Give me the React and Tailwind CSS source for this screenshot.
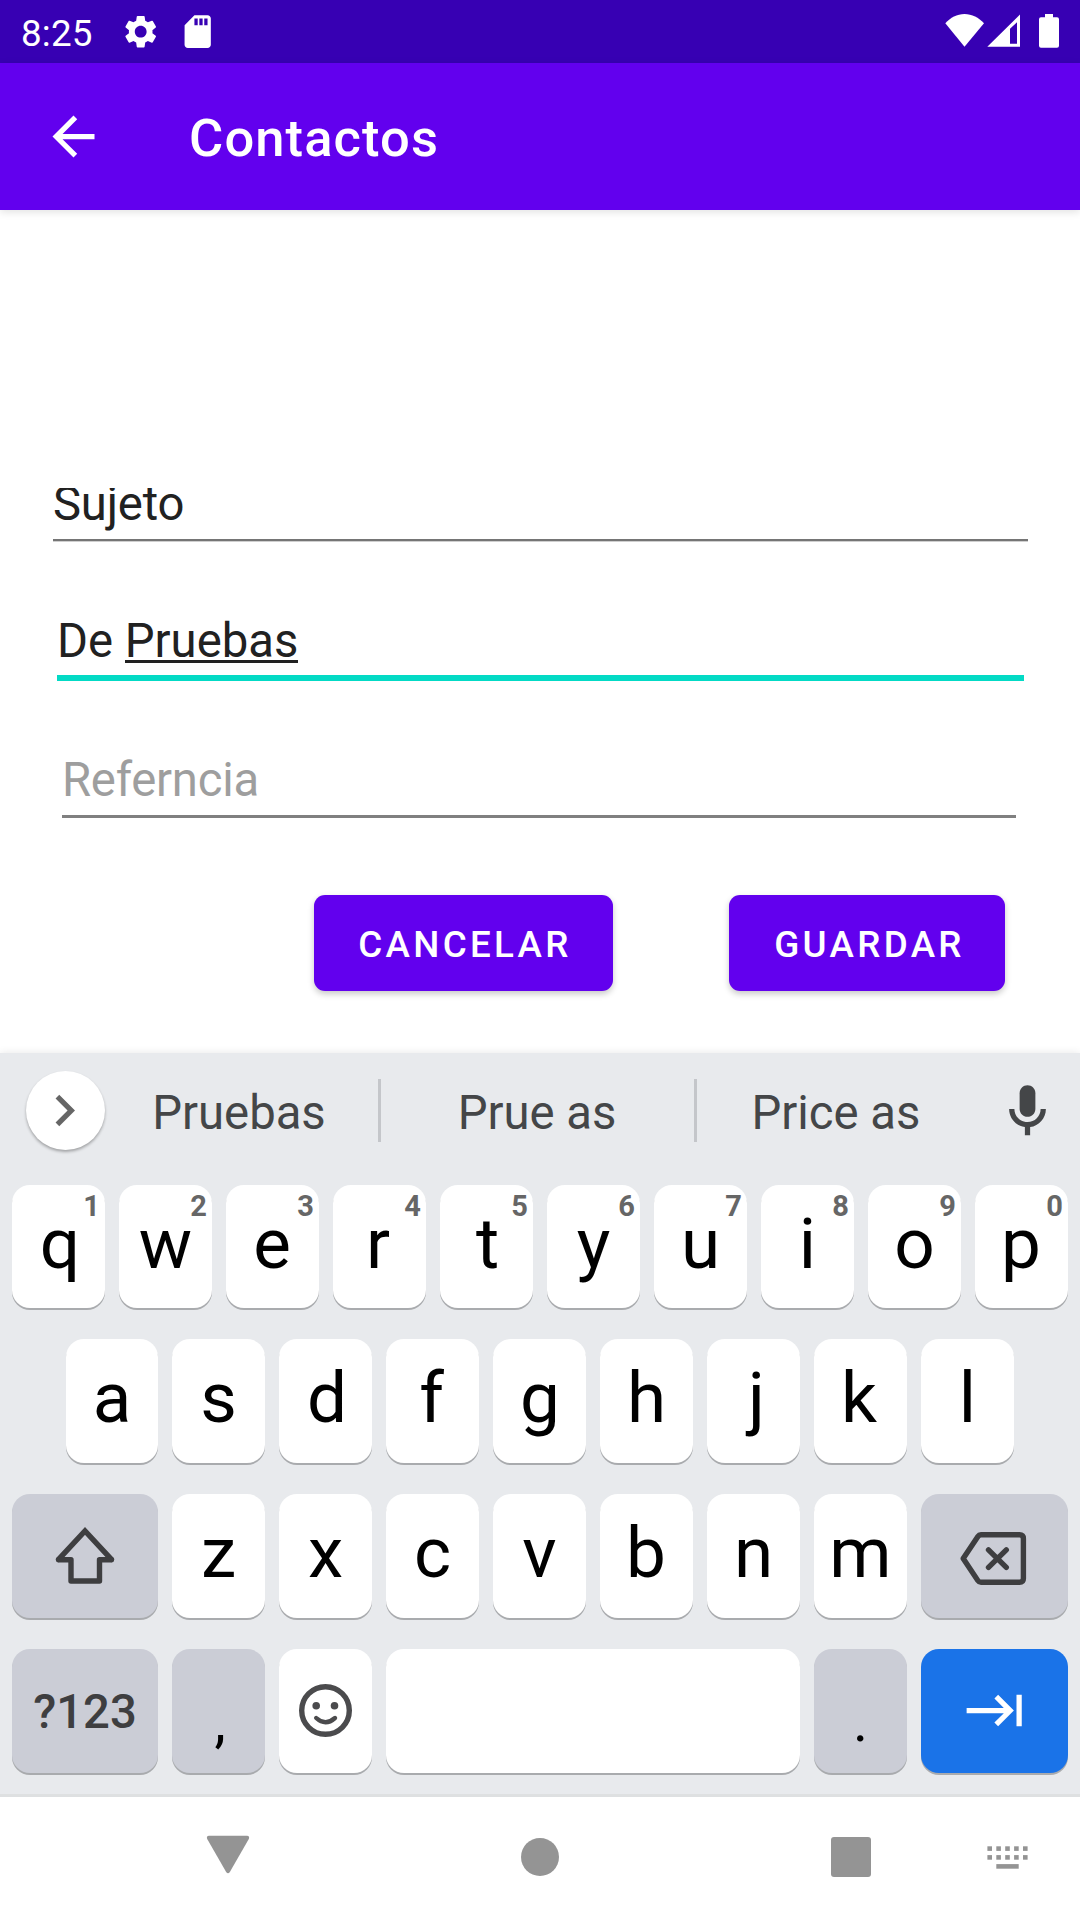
import React from "react";
import { MdArrowBack, MdSettings, MdSdCard, MdKeyboardTab, MdChevronRight } from "react-icons/md";

const KEY = "flex shrink-0 items-center justify-center rounded-[18px] shadow-[0_2px_0_#a9abae]";

// Optical centring: glyphs whose ink is off the middle of their advance width.
const NUDGE = {
  q: "ml-[3px]",
  e: "mr-[1px]",
  r: "mr-[3px]",
  t: "ml-[2px]",
  p: "mr-[1px]",
  d: "ml-[3px]",
  f: "mr-[2px]",
  g: "ml-[1px]",
  j: "ml-[6px]",
  k: "mr-[3px]",
  b: "mr-[1px]",
};

function Letter({ children, hint, narrow }) {
  return (
    <div className={`${KEY} relative bg-white pb-[6px] ${narrow ? "w-[92px]" : "w-[93px]"}`}>
      <span className={`text-[71px] leading-[80px] text-black ${NUDGE[children] || ""}`}>{children}</span>
      {hint && (
        <span className="absolute right-[5px] top-[4px] text-[29px] font-bold leading-[34px] text-[#666]">
          {hint}
        </span>
      )}
    </div>
  );
}

function StatusBar() {
  return (
    <div className="flex h-[63px] items-center bg-[#3700b3] pl-[21px] text-white">
      <span className="w-[99.5px] pt-[4px] text-[36.75px] leading-[40px] tracking-[0.2px]">8:25</span>
      <MdSettings className="size-[39.4px]" />
      <MdSdCard className="ml-[18.5px] size-[39.4px]" />
      <svg className="ml-auto mr-[3px] h-[63px] w-[39px]" viewBox="945 0 39 63" fill="currentColor">
        <path d="M964.5 46.8 945.3 23.3C950.5 17.5 957 14 964.5 14S978.7 17.5 984 23.3Z" />
      </svg>
      <svg className="mr-[19px] h-[63px] w-[33px]" viewBox="987 0 33 63" fill="currentColor">
        <path fillRule="evenodd" d="M987.3 46.8H1020V14.5ZM1010 28.8V43.7H1017V22.2Z" />
      </svg>
      <svg className="mr-[21px] h-[63px] w-[20px]" viewBox="1039 0 20 63" fill="currentColor">
        <path d="M1045 14h8v3.3h4a2 2 0 0 1 2 2V45.8a2 2 0 0 1-2 2H1041a2 2 0 0 1-2-2V19.3a2 2 0 0 1 2-2h4Z" />
      </svg>
    </div>
  );
}

function Keyboard() {
  return (
    <div className="h-[741px] bg-[#e8eaed] shadow-[0_0_8px_rgba(0,0,0,0.1)]">
      <div className="flex h-[132px] pt-[18px]">
        <div className="ml-[26px] flex size-[79px] items-center justify-center rounded-full bg-white text-[#666] shadow-[0_2px_3px_rgba(0,0,0,0.3)]">
          <MdChevronRight className="mr-[2px] size-[63px]" />
        </div>
        <div className="-ml-[5px] flex h-[79px] text-[47.25px] leading-[85px] text-[#444648]">
          <span className="w-[278px] text-center">Pruebas</span>
          <span className="mt-[8px] h-[63px] w-[3px] bg-[#c4c6ca]" />
          <span className="w-[313px] pr-[1px] text-center">Prue as</span>
          <span className="mt-[8px] h-[63px] w-[3px] bg-[#c4c6ca]" />
          <span className="w-[278px] text-center">Price as</span>
        </div>
        <svg className="ml-[21px] mt-[9px] size-[63px]" viewBox="0 0 24 24" fill="#444648">
          <path d="M12 14c1.66 0 3-1.34 3-3V5c0-1.66-1.34-3-3-3S9 3.34 9 5v6c0 1.66 1.34 3 3 3z" />
          <path d="M17 11c0 2.76-2.24 5-5 5s-5-2.24-5-5H5c0 3.53 2.61 6.43 6 6.92V21h2v-3.08c3.39-.49 6-3.39 6-6.92h-2z" />
        </svg>
      </div>
      <div className="flex flex-col gap-[31px] px-[12px]">
        <div className="flex h-[123px] gap-[14px]">
          {"qwertyuiop".split("").map((c, i) => (
            <Letter key={c} hint={String((i + 1) % 10)}>{c}</Letter>
          ))}
        </div>
        <div className="flex h-[124px] gap-[14px] pl-[54px]">
          {"asdfghjkl".split("").map((c, i) => (
            <Letter key={c} narrow={i === 0}>{c}</Letter>
          ))}
        </div>
        <div className="flex h-[124px] gap-[14px]">
          <div className={`${KEY} w-[146px] bg-[#cbcdd6]`}>
            <svg className="h-[124px] w-[146px]" viewBox="12 1494 146 124" fill="none" stroke="#3e3e40" strokeWidth="5.4" strokeLinecap="round">
              <path d="M58.6 1559.3 85 1531 111.4 1559.3" />
              <path strokeLinejoin="round" d="M58.6 1559.8H71V1581H99.5V1559.8H111.4" />
            </svg>
          </div>
          {"zxcvbnm".split("").map((c) => (
            <Letter key={c}>{c}</Letter>
          ))}
          <div className={`${KEY} w-[147px] bg-[#cbcdd6]`}>
            <svg className="h-[124px] w-[147px]" viewBox="921 1494 147 124" fill="none" stroke="#3e3e40" strokeWidth="5.4" strokeLinecap="round" strokeLinejoin="round">
              <path d="M981 1534.8H1019.5Q1023.4 1534.8 1023.4 1538.7V1578.5Q1023.4 1582.3 1019.5 1582.3H981Q979 1582.3 977.9 1580.6L963.2 1558.5 977.9 1536.5Q979 1534.8 981 1534.8Z" />
              <path d="M988.5 1549.8 1006.3 1567.4M1006.3 1549.8 988.5 1567.4" />
            </svg>
          </div>
        </div>
        <div className="flex h-[124px] gap-[14px]">
          <div className={`${KEY} w-[146px] bg-[#cbcdd6] pt-[2px] text-[47.25px] font-medium text-[#3e3e40]`}>?123</div>
          <div className={`${KEY} w-[93px] bg-[#cbcdd6] pl-[3px] pt-[21px] text-[57px] leading-[80px] text-black`}>,</div>
          <div className={`${KEY} w-[93px] bg-white`}>
            <svg className="h-[124px] w-[93px]" viewBox="279 1649 93 124" fill="none" stroke="#4b4b4d">
              <circle cx="325.5" cy="1710.5" r="23.8" strokeWidth="5.4" />
              <circle cx="316.2" cy="1705.7" r="3.8" fill="#4b4b4d" stroke="none" />
              <circle cx="334.5" cy="1705.7" r="3.8" fill="#4b4b4d" stroke="none" />
              <path d="M316.2 1718Q325.5 1726.5 335 1718" strokeWidth="4.4" strokeLinecap="round" />
            </svg>
          </div>
          <div className={`${KEY} w-[414px] bg-white`} />
          <div className={`${KEY} w-[93px] bg-[#cbcdd6] pt-[21px] text-[57px] leading-[80px] text-black`}>.</div>
          <div className={`${KEY} w-[147px] bg-[#1a73e8] text-white`}>
            <MdKeyboardTab className="mb-[1px] ml-[2px] size-[63px]" />
          </div>
        </div>
      </div>
    </div>
  );
}

function NavBar() {
  return (
    <div className="flex h-[126px] border-t-[3px] border-[#dee0e1] bg-white pt-[38px]">
      <svg className="ml-[206px] h-[42px] w-[44px]" viewBox="206 1835 44 42" fill="#949494">
        <path d="M209 1835.7H247Q250 1836 248.8 1839L229.7 1872.2Q228 1874.3 226.3 1872.2L207.2 1839Q206 1836 209 1835.7Z" />
      </svg>
      <div className="ml-[271px] mt-[3px] size-[38.4px] rounded-full bg-[#949494]" />
      <div className="ml-[271.6px] mt-[2px] size-[40px] rounded-[3px] bg-[#949494]" />
      <svg className="ml-[116px] mt-[11px] h-[24px] w-[41px]" viewBox="987 1846 41 24" fill="#949494">
        {[0, 1, 2, 3, 4].map((i) => (
          <React.Fragment key={i}>
            <rect x={987.4 + i * 8.9} y="1846.3" width="4.6" height="4.6" />
            <rect x={987.4 + i * 8.9} y="1855.1" width="4.6" height="4.6" />
          </React.Fragment>
        ))}
        <rect x="996.3" y="1864.1" width="22.4" height="4.6" />
      </svg>
    </div>
  );
}

export default function App() {
  return (
    <div className="flex h-[1920px] w-[1080px] flex-col overflow-hidden bg-white font-[Roboto,sans-serif]">
      <StatusBar />
      <div className="flex h-[147px] items-center bg-[#6200ee] pl-[42px] text-white shadow-[0_2px_8px_rgba(0,0,0,0.12)]">
        <MdArrowBack className="size-[63px]" />
        <h1 className="ml-[84px] pt-[3px] text-[52.5px] font-medium leading-[64px] tracking-[0.021em]">Contactos</h1>
      </div>
      <div className="flex h-[843px] flex-col pt-[278px] text-[47.25px] text-[#212121]">
        <div className="ml-[53px] h-[53px] w-[975px] border-b-2 border-[#757575] shadow-[0_1px_0_#cfcfcf]">
          <div className="h-[45px] overflow-hidden">
            <div className="-mt-[14px] leading-[60px] tracking-[-0.2px]">Sujeto</div>
          </div>
        </div>
        <div className="ml-[57px] mt-[70px] h-[70px] w-[967px] border-b-[6px] border-[#03dac5] leading-[60px]">
          De <span className="inline-block h-[52px] border-b-[3px] border-[#212121]">Pruebas</span>
        </div>
        <div className="ml-[62px] mt-[69px] h-[68px] w-[954px] border-b-[3px] border-[#808080] leading-[60px] tracking-[-0.25px] text-[#9e9e9e]">
          Referncia
        </div>
        <div className="ml-[314px] mt-[77px] flex text-[36.75px] font-medium leading-[100px] tracking-[0.0905em] text-white">
          <div className="h-[96px] w-[299px] rounded-[11px] bg-[#6200ee] pl-[3px] text-center shadow-[0_3px_6px_rgba(0,0,0,0.22)]">CANCELAR</div>
          <div className="ml-[116px] h-[96px] w-[276px] rounded-[11px] bg-[#6200ee] pl-[5px] text-center shadow-[0_3px_6px_rgba(0,0,0,0.22)]">GUARDAR</div>
        </div>
      </div>
      <Keyboard />
      <NavBar />
    </div>
  );
}
